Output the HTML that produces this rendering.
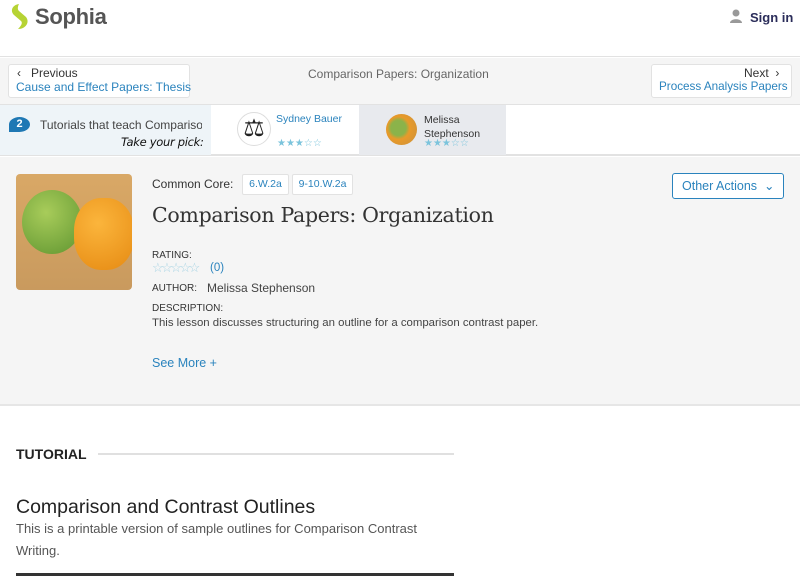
<!DOCTYPE html>
<html><head><style>
*{margin:0;padding:0;box-sizing:border-box}
body{width:800px;height:576px;overflow:hidden;font-family:"Liberation Sans",sans-serif;background:#fff;position:relative;color:#333}
.a{position:absolute;white-space:nowrap}
.blue{color:#2a83bd}
</style></head><body>
<div class="a" style="left:0;top:0;width:800px;height:57px;background:#fff;border-bottom:1px solid #e2e2e2"></div>
<svg class="a" style="left:10px;top:3px" width="20" height="27" viewBox="0 0 20 27"><path d="M9 1 C2 2 0 8 4 12 L11 18 C13 20 11 23 8 26 C16 26 20 19 16 14 L9 8 C7 6 8 3 9 1Z" fill="#b6d334"/></svg>
<div class="a" style="left:35px;top:4px;font-size:22px;font-weight:bold;color:#555;letter-spacing:-0.3px">Sophia</div>
<svg class="a" style="left:729px;top:9px" width="14" height="15" viewBox="0 0 14 15"><circle cx="7" cy="4" r="3.5" fill="#999"/><path d="M1 14 C1 9 13 9 13 14Z" fill="#999"/></svg>
<div class="a" style="left:750px;top:10px;font-size:13px;font-weight:bold;color:#2b2d5a">Sign in</div>
<div class="a" style="left:0;top:58px;width:800px;height:47px;background:#f5f5f5;border-bottom:1px solid #e2e2e2"></div>
<div class="a" style="left:8px;top:64px;width:182px;height:34px;background:#fff;border:1px solid #e2e2e2;border-radius:3px"></div>
<div class="a" style="left:17px;top:66px;font-size:12px;color:#333">‹&nbsp;&nbsp; Previous</div>
<div class="a blue" style="left:16px;top:80px;font-size:12px">Cause and Effect Papers: Thesis</div>
<div class="a" style="left:308px;top:67px;font-size:12px;color:#666">Comparison Papers: Organization</div>
<div class="a" style="left:651px;top:64px;width:141px;height:34px;background:#fff;border:1px solid #e2e2e2;border-radius:3px"></div>
<div class="a" style="left:744px;top:66px;font-size:12px;color:#333">Next &nbsp;›</div>
<div class="a blue" style="left:659px;top:80px;font-size:11.7px">Process Analysis Papers</div>
<div class="a" style="left:0;top:105px;width:800px;height:51px;background:#fff;border-bottom:2px solid #e2e2e2"></div>
<div class="a" style="left:0;top:105px;width:211px;height:50px;background:#eef4f8"></div>
<div class="a" style="left:9px;top:117px;width:21px;height:15px;background:#1f78b4;border-radius:50% 50% 50% 0;color:#fff;font-size:11px;font-weight:bold;text-align:center;line-height:15px">2</div>
<div class="a" style="left:40px;top:118px;font-size:12px;color:#444;width:162px;overflow:hidden">Tutorials that teach Comparison</div>
<div class="a" style="left:121px;top:135px;font-size:11.5px;color:#111;font-family:'DejaVu Sans',sans-serif;font-style:italic;letter-spacing:-0.3px">Take your pick:</div>
<div class="a" style="left:237px;top:112px;width:34px;height:34px;border-radius:50%;background:#fff;border:1px solid #ddd;font-size:24px;text-align:center;line-height:32px;color:#222">⚖</div>
<div class="a blue" style="left:276px;top:113px;font-size:10.5px">Sydney Bauer</div>
<div class="a" style="left:277px;top:138px;font-size:10px;color:#7cc4dc">★★★☆☆</div>
<div class="a" style="left:359px;top:105px;width:147px;height:50px;background:#e8eaee"></div>
<div class="a" style="left:386px;top:114px;width:31px;height:31px;border-radius:50%;background:radial-gradient(circle at 40% 45%,#8bb34a 0 30%,#e89a2a 45%,#c8913e 100%)"></div>
<div class="a" style="left:424px;top:113px;font-size:10.5px;color:#333;line-height:14px">Melissa<br>Stephenson</div>
<div class="a" style="left:424px;top:138px;font-size:10px;color:#7cc4dc">★★★☆☆</div>
<div class="a" style="left:0;top:157px;width:800px;height:249px;background:#f5f5f5;border-bottom:2px solid #e6e6e6"></div>
<div class="a" style="left:16px;top:174px;width:116px;height:116px;border-radius:4px;background:linear-gradient(180deg,#d9a866,#c99a5e);overflow:hidden">
<div class="a" style="left:6px;top:16px;width:60px;height:64px;border-radius:50%;background:radial-gradient(circle at 40% 35%,#a8cc5a,#5f9530)"></div>
<div class="a" style="left:58px;top:24px;width:60px;height:72px;border-radius:45%;background:radial-gradient(circle at 40% 35%,#fbb53c,#e68a12)"></div>
</div>
<div class="a" style="left:152px;top:177px;font-size:12px;color:#333">Common Core:</div>
<div class="a blue" style="left:242px;top:174px;width:47px;height:21px;background:#fff;border:1px solid #e2e2e2;border-radius:2px;font-size:10.5px;text-align:center;line-height:19px">6.W.2a</div>
<div class="a blue" style="left:292px;top:174px;width:61px;height:21px;background:#fff;border:1px solid #e2e2e2;border-radius:2px;font-size:10.5px;text-align:center;line-height:19px">9-10.W.2a</div>
<div class="a" style="left:672px;top:173px;width:112px;height:26px;border:1px solid #2a83bd;border-radius:3px;background:#fff"></div>
<div class="a blue" style="left:682px;top:178px;font-size:12.5px">Other Actions&nbsp; ⌄</div>
<div class="a" style="left:152px;top:203px;font-size:20.5px;font-family:'DejaVu Serif','Liberation Serif',serif;color:#333;letter-spacing:-0.3px">Comparison Papers: Organization</div>
<div class="a" style="left:152px;top:250px;font-size:10px;color:#333">RATING:</div>
<div class="a" style="left:152px;top:260px;font-size:13px;color:#a8d4e4;letter-spacing:-2.5px">☆☆☆☆☆</div>
<div class="a blue" style="left:210px;top:262px;font-size:11.5px">(0)</div>
<div class="a" style="left:152px;top:283px;font-size:10px;color:#333">AUTHOR:</div>
<div class="a" style="left:207px;top:281px;font-size:12px;color:#444">Melissa Stephenson</div>
<div class="a" style="left:152px;top:303px;font-size:10px;color:#333">DESCRIPTION:</div>
<div class="a" style="left:152px;top:317px;font-size:11.4px;color:#444">This lesson discusses structuring an outline for a comparison contrast paper.</div>
<div class="a blue" style="left:152px;top:356px;font-size:12.5px">See More +</div>
<div class="a" style="left:16px;top:446px;font-size:14px;font-weight:bold;color:#222">TUTORIAL</div>
<div class="a" style="left:98px;top:453px;width:356px;height:2px;background:#e0e0e0"></div>
<div class="a" style="left:16px;top:496px;font-size:19.5px;color:#222">Comparison and Contrast Outlines</div>
<div class="a" style="left:16px;top:518px;font-size:13px;color:#555;line-height:22px;width:420px;white-space:normal">This is a printable version of sample outlines for Comparison Contrast Writing.</div>
<div class="a" style="left:16px;top:573px;width:438px;height:3px;background:#333"></div>
</body></html>
